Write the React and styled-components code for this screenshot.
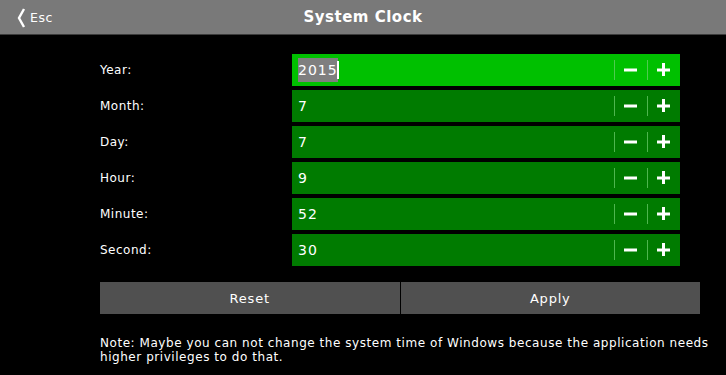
import React from "react";
import styled, { createGlobalStyle } from "styled-components";

const GlobalStyle = createGlobalStyle`
  html, body {
    margin: 0;
    padding: 0;
    background: #000000;
  }
  body {
    font-family: "DejaVu Sans", Verdana, sans-serif;
    color: #ffffff;
  }
`;

const fields = [
  { label: "Year:", value: "2015", active: true },
  { label: "Month:", value: "7" },
  { label: "Day:", value: "7" },
  { label: "Hour:", value: "9" },
  { label: "Minute:", value: "52" },
  { label: "Second:", value: "30" },
];

function App() {
  return (
    <Page>
      <GlobalStyle />
      <Header>
        <Back>
          <svg width="10" height="20" viewBox="0 0 10 20">
            <path d="M8 1 L3 10 L8 19" stroke="#fff" strokeWidth="2.4" fill="none" />
          </svg>
          <span>Esc</span>
        </Back>
        <Title>System Clock</Title>
      </Header>
      <Content>
        <Fields>
          {fields.map((f) => (
            <Row key={f.label}>
              <Label>{f.label}</Label>
              <Field $active={f.active}>
                <Value>
                  {f.active ? (
                    <>
                      <Selected>{f.value}</Selected>
                      <Caret />
                    </>
                  ) : (
                    f.value
                  )}
                </Value>
                <Sep />
                <StepButton>
                  <svg width="14" height="14" viewBox="0 0 14 14">
                    <rect x="0" y="5.5" width="13" height="3" fill="#fff" />
                  </svg>
                </StepButton>
                <Sep />
                <StepButton>
                  <svg width="14" height="14" viewBox="0 0 14 14">
                    <rect x="0" y="5.5" width="13" height="3" fill="#fff" />
                    <rect x="5" y="0" width="3" height="13" fill="#fff" />
                  </svg>
                </StepButton>
              </Field>
            </Row>
          ))}
        </Fields>
        <Buttons>
          <Button>Reset</Button>
          <Button>Apply</Button>
        </Buttons>
        <Note>
          Note: Maybe you can not change the system time of Windows because the application needs
          higher privileges to do that.
        </Note>
      </Content>
    </Page>
  );
}
export default App;

const Page = styled.div`
  width: 726px;
  height: 375px;
  background: #000000;
  overflow: hidden;
`;

const Header = styled.div`
  position: relative;
  height: 34px;
  background: #797979;
  border-bottom: 1px solid #3c3c3c;
  display: flex;
  align-items: center;
  justify-content: center;
`;

const Back = styled.div`
  position: absolute;
  left: 16px;
  top: 8px;
  display: flex;
  align-items: center;
  gap: 4px;
  font-size: 12.5px;
  letter-spacing: 0.6px;

  span {
    margin-top: -2px;
  }
`;

const Title = styled.div`
  font-size: 15px;
  font-weight: bold;
  letter-spacing: 0.5px;
  margin-top: -1px;
`;

const Content = styled.div`
  padding: 19px 26px 0 100px;
`;

const Fields = styled.div`
  display: flex;
  flex-direction: column;
  gap: 4px;
`;

const Row = styled.div`
  display: flex;
  align-items: center;
  height: 32px;
`;

const Label = styled.div`
  width: 192px;
  font-size: 12px;
  letter-spacing: 0.5px;
`;

const Field = styled.div`
  width: 388px;
  height: 32px;
  display: flex;
  align-items: center;
  background: ${(p) => (p.$active ? "#00c000" : "#007b00")};
`;

const Value = styled.div`
  flex: 1;
  padding-left: 6px;
  font-size: 14px;
  letter-spacing: 1px;
  display: flex;
  align-items: center;
`;

const Selected = styled.span`
  background: #7f7f7f;
  line-height: 24px;
`;

const Caret = styled.span`
  width: 2px;
  height: 18px;
  margin-left: -1px;
  background: #ffffff;
`;

const Sep = styled.div`
  width: 1px;
  height: 20px;
  background: #6fd06f;
  opacity: 0.7;
`;

const StepButton = styled.div`
  width: 32px;
  display: flex;
  justify-content: center;
  align-items: center;
`;

const Buttons = styled.div`
  margin-top: 16px;
  width: 600px;
  display: flex;
  gap: 1px;
`;

const Button = styled.div`
  flex: 1;
  height: 32px;
  background: #505050;
  display: flex;
  align-items: center;
  justify-content: center;
  font-size: 13px;
  letter-spacing: 0.8px;
`;

const Note = styled.div`
  margin-top: 22px;
  width: 610px;
  font-size: 12px;
  letter-spacing: 0.55px;
  line-height: 14px;
`;
